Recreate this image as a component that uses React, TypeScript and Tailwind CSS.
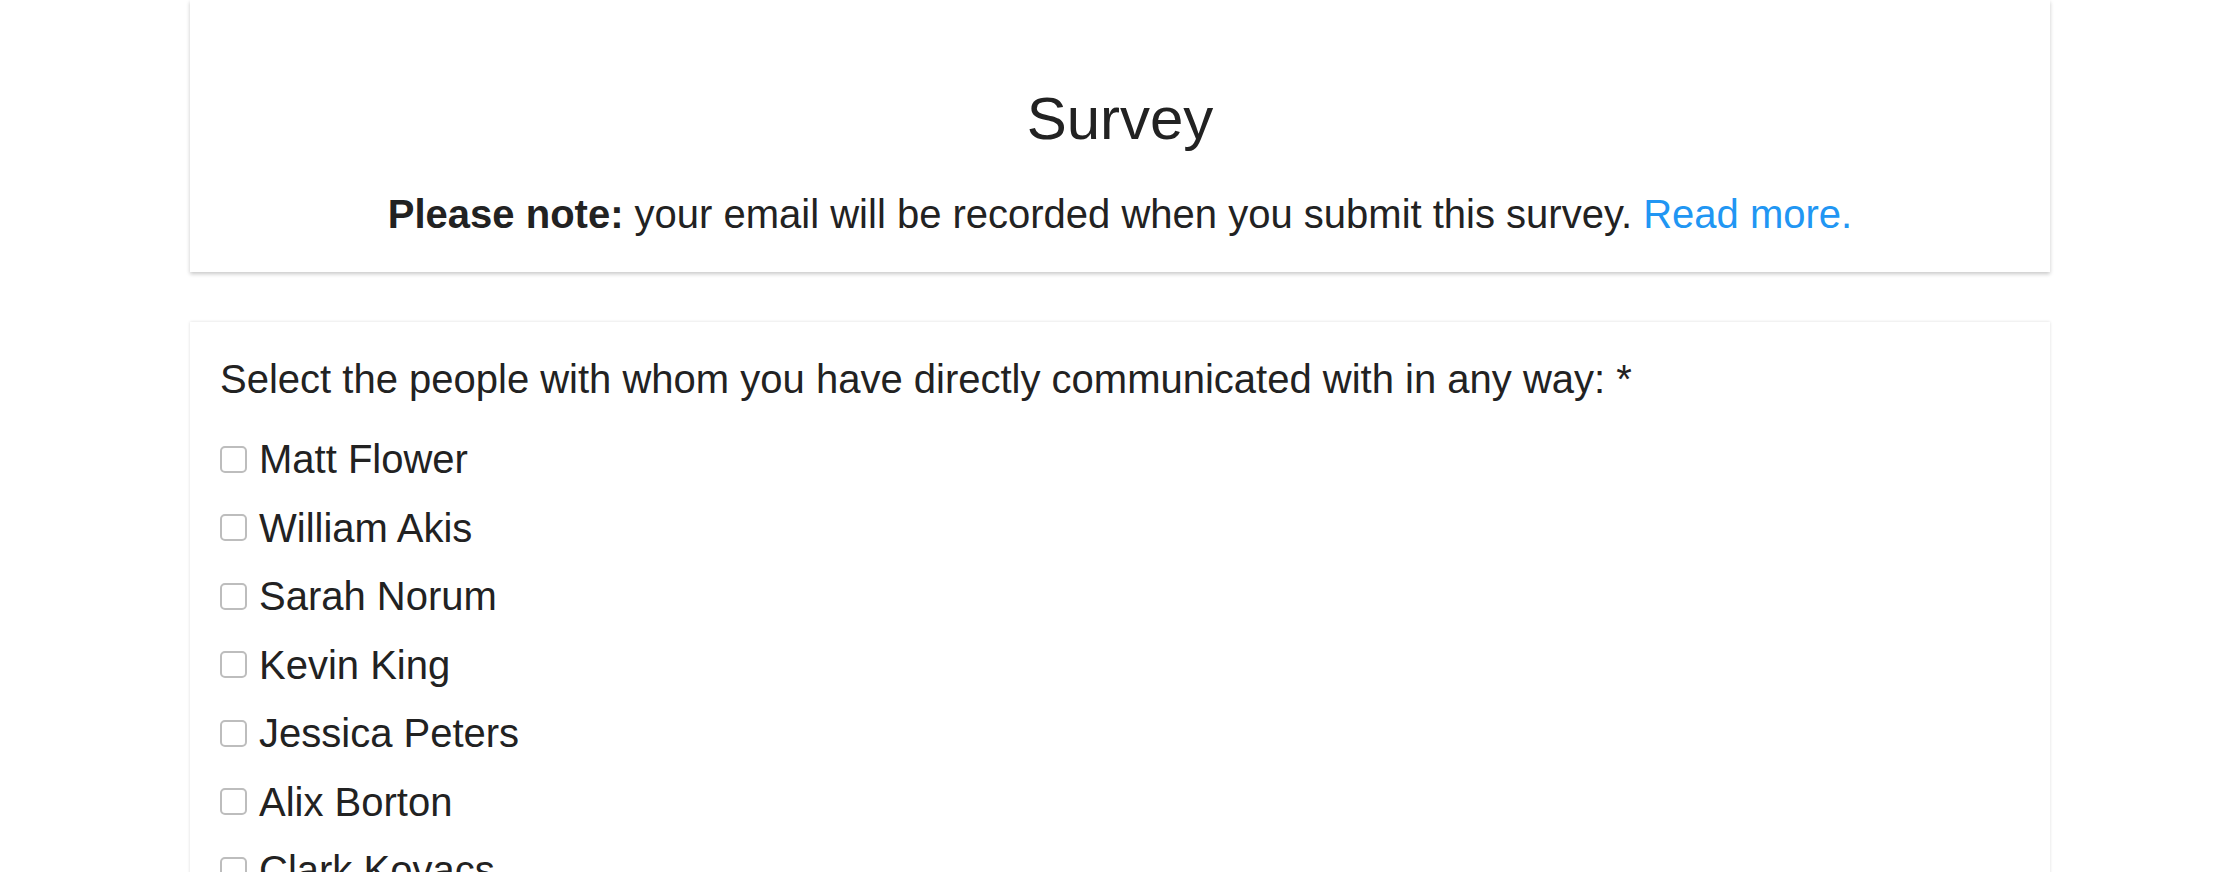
import React from 'react';

const people = [
	'Matt Flower',
	'William Akis',
	'Sarah Norum',
	'Kevin King',
	'Jessica Peters',
	'Alix Borton',
	'Clark Kovacs',
];

const App = () => {
	return (
		<div className="min-h-screen bg-white text-[#222222]" style={{ fontFamily: '"Liberation Sans", Arial, Helvetica, sans-serif' }}>
			<div className="mx-auto w-[1860px]">
				{/* Header card */}
				<div className="bg-white pt-[86px] pb-[34px] text-center shadow-[0_2px_4px_rgba(0,0,0,0.22)]">
					<h1 className="text-[60px] leading-[66px] font-normal">Survey</h1>
					<p className="mt-[38px] text-[40px] leading-[48px]">
						<span className="font-bold">Please note:</span> your email will be recorded when you submit this survey.{' '}
						<a href="#" className="text-[#2196f3]">Read more.</a>
					</p>
				</div>

				{/* Question card */}
				<div className="mt-[50px] bg-white px-[30px] pt-[33px] pb-8 shadow-[0_0_3px_rgba(0,0,0,0.14)]">
					<p className="text-[40px] leading-[48px]">Select the people with whom you have directly communicated with in any way: *</p>
					<div className="mt-[22px] flex flex-col">
						{people.map((name) => (
							<label key={name} className="flex h-[68.5px] items-center cursor-pointer">
								<input
									type="checkbox"
									className="h-[27px] w-[27px] shrink-0 appearance-none rounded-[5px] border-2 border-[#bdbdbd] bg-white"
								/>
								<span className="ml-[12px] text-[40px] leading-[48px]">{name}</span>
							</label>
						))}
					</div>
				</div>
			</div>
		</div>
	);
};

export default App;
